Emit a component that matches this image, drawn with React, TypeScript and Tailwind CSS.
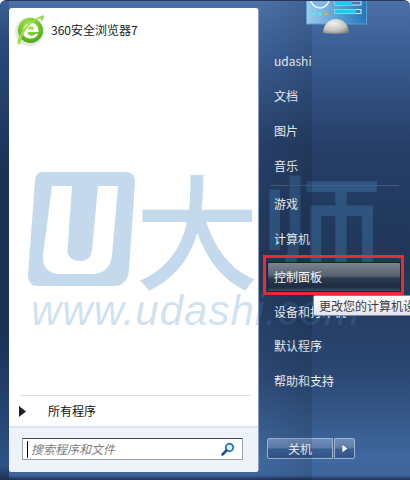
const cjk = "font-['Noto_Sans_CJK_SC','Noto_Sans',sans-serif]";

function BrowserIcon() {
  return (
    <svg width="32" height="34" viewBox="0 0 32 34" className="shrink-0">
      <defs>
        <radialGradient id="ball" cx="0.45" cy="0.3" r="0.8">
          <stop offset="0" stopColor="#b4e65a" />
          <stop offset="0.55" stopColor="#6cc422" />
          <stop offset="1" stopColor="#3f9a12" />
        </radialGradient>
      </defs>
      <circle cx="15.500" cy="18.500" r="14.500" fill="#e3e8e6" />
      <circle cx="16.500" cy="17.500" r="12.500" fill="url(#ball)" />
      <path d="M9 19c0-5.500 3.500-9 8-9s7.500 3 7.500 9H13.500c.3 2.500 1.800 3.700 4 3.700 1.700 0 3-.6 3.800-1.900h3C23 24 20.500 25.500 17 25.500 12.500 25.500 9 23.500 9 19zm4.700-2.500h6.400c-.3-2-1.500-3.300-3.200-3.300s-2.900 1.300-3.200 3.300z" fill="#fff" fillRule="evenodd" />
      <path d="M4 31C2 28 8 11 27 3c2.500-1 3.500-.5 3 1.500-.5 1.500-1.500 3-2.500 4 0-2-.8-3.500-2.500-3C16 9 8 20 6.500 29.500c-.3 2-1.500 2.700-2.500 1.500z" fill="#9bdc45" />
    </svg>
  );
}

function ControlPanelPicture() {
  return (
    <div className="absolute left-[47px] top-0 flex flex-col items-center">
      <svg width="62" height="34" viewBox="0 0 62 34">
        <defs>
          <linearGradient id="pane" x1="0" y1="0" x2="1" y2="0">
            <stop offset="0" stopColor="#9ecbea" />
            <stop offset="1" stopColor="#1f78bd" />
          </linearGradient>
          <radialGradient id="dome" cx="0.4" cy="0.3" r="0.8">
            <stop offset="0" stopColor="#f2f2ee" />
            <stop offset="0.6" stopColor="#c6c6c0" />
            <stop offset="1" stopColor="#7d7f7c" />
          </radialGradient>
        </defs>
        <rect x="0.500" y="-4" width="60" height="27" fill="url(#pane)" stroke="#5f9fd2" />
        <circle cx="14" cy="-2" r="9" fill="#7fb5de" stroke="#e4f2fb" strokeWidth="1.500" />
        <rect x="29" y="0" width="26" height="4" fill="#4c78ba" stroke="#c9ecfa" />
        <rect x="29" y="0" width="17" height="4" fill="#15cdf0" />
        <rect x="29" y="8.500" width="26" height="4" fill="#4c78ba" stroke="#c9ecfa" />
        <rect x="29" y="8.500" width="21" height="4" fill="#15cdf0" />
        <circle cx="8" cy="13" r="1.700" fill="#43eef5" />
        <circle cx="14" cy="13" r="1.700" fill="#43eef5" />
        <circle cx="20" cy="13" r="1.700" fill="#f5a83a" />
        <path d="M17 32c0-8 6-14 13-14s13 6 13 14c-6 1-20 1-26 0z" fill="url(#dome)" />
      </svg>
    </div>
  );
}

function Watermark() {
  const tint = 'rgba(70,140,195,0.32)';
  return (
    <div className="absolute left-0 top-0 w-[410px] h-[480px] pointer-events-none overflow-hidden">
      <svg width="112" height="120" viewBox="0 0 112 120" className="absolute left-[26px] top-[169px]">
        <path
          fill={tint}
          fillRule="evenodd"
          d="M17 2h83c6 0 9 4 9 10l-6 88c-1 10-6 16-15 16H11c-6 0-9-5-9-11L9 11c.5-6 3-9 8-9zM26 16L17 85c-1 12 5 19 18 19h30c13 0 20-7 21-19l6-69H72l-6 64c-.5 7-5 11-12 11s-13-4-12.500-11L46 16z"
        />
      </svg>
      <span
        className="absolute left-[135px] top-[139px] text-[124px] leading-[172px] font-medium font-['Noto_Sans_CJK_SC',sans-serif]"
        style={{ color: tint }}
      >
        大师
      </span>
      <span
        className="absolute left-[31px] top-[290px] text-[42px] leading-[40px] italic tracking-[1px] whitespace-nowrap font-['Liberation_Sans',sans-serif] opacity-80"
        style={{ color: tint }}
      >
        www.udashi.com
      </span>
    </div>
  );
}

function NavRow({ label, className = '' }: { label: string; className?: string }) {
  return (
    <div className={`h-[35px] flex items-center pl-[15px] text-[12px] text-[#f4f7fb] ${className}`}>{label}</div>
  );
}

export default function App() {
  return (
    <div className={`relative w-[410px] h-[480px] overflow-hidden flex rounded-t-[6px] border-t border-[#27395a] ${cjk} bg-[linear-gradient(180deg,#4b70a6_0%,#3b5f95_10%,#263f68_30%,#203659_55%,#2b4873_78%,#4069a0_96%,#3d659b_99%,#1d2f4f_100%)]`}>
      {/* left edge of the glass frame */}
      <div className="w-[9px] h-full shrink-0 bg-[linear-gradient(180deg,#3c5f96_0%,#2a4a7c_8%,#1c3257_35%,#1c3257_70%,#2c5286_97%,#1d2f4f_100%)]" />

      {/* programs column */}
      <div className="w-[250px] h-[464px] mt-[7px] shrink-0 flex flex-col bg-white rounded-[3px] border-r border-[#8f9db3]">
        <div className="flex items-center gap-[5px] pl-[5px] pt-[5px]">
          <BrowserIcon />
          <span className="text-[12px] text-[#1c1c1c]">360安全浏览器7</span>
        </div>
        <div className="flex-1" />
        <div className="ml-[11px] mr-[7px] h-px bg-[#d5e1ec]" />
        <div className="h-[30px] flex items-center pl-[10px] text-[12px] text-[#111]">
          <svg width="7" height="11" viewBox="0 0 7 11" className="shrink-0">
            <path d="M0 0l7 5.500L0 11z" fill="#1a2028" />
          </svg>
          <span className="ml-[22px]">所有程序</span>
        </div>
        <div className="flex-1 max-h-[46px] rounded-b-[3px] border-t-2 border-[#dbe4ef] bg-[#eef2f9] pt-[10px] pl-[13px]">
          <div className="w-[221px] h-[22px] flex items-center bg-white border border-[#9aa0a8] border-t-[#444b55] pl-[4px] pr-[7px]">
            <div className="w-px h-[17px] bg-black" />
            <span className="ml-[3px] flex-1 text-[12px] italic text-[#7d7d7d]">搜索程序和文件</span>
            <svg width="14" height="14" viewBox="0 0 14 14">
              <circle cx="8.500" cy="5.500" r="3.700" fill="#dff0fb" stroke="#2f7fc4" strokeWidth="2" />
              <path d="M5.500 8.500L1.500 12.500" stroke="#1c4f92" strokeWidth="2.500" strokeLinecap="round" />
            </svg>
          </div>
        </div>
      </div>

      <Watermark />

      {/* right column */}
      <div className="relative flex-1 flex flex-col pt-[42px]">
        <div className="absolute left-0 top-0 w-[53px] h-full pointer-events-none bg-[linear-gradient(90deg,rgba(0,0,0,0),rgba(0,0,0,0.12))]" />
        <ControlPanelPicture />
        <NavRow label="udashi" />
        <NavRow label="文档" />
        <NavRow label="图片" />
        <NavRow label="音乐" />
        <div className="mx-[11px] mt-[2px] h-px bg-[#465c80]" />
        <NavRow label="游戏" />
        <NavRow label="计算机" />
        {/* selected row, the red frame is an annotation on top of it */}
        <div className="relative mt-[6px] mb-[1px]">
          <div className="ml-[8px] mr-[9px] h-[30px] flex items-center pl-[6px] text-[12px] text-[#f4f7fb] rounded-[2px] border border-[#1a2230] bg-[linear-gradient(180deg,#7b8492_0%,#59626f_45%,#2c3a50_55%,#1e2b40_85%,#3d4e66_100%)]">
            控制面板
          </div>
          <div className="absolute left-[4px] top-[-7px] w-[141px] h-[40px] border-[3px] border-[#ec2b30]" />
        </div>
        <NavRow label="设备和打印机" className="mt-px" />
        <NavRow label="默认程序" className="-mt-px" />
        <NavRow label="帮助和支持" />
        <div className="flex-1" />
        <div className="flex gap-px ml-[8px] mb-[21px] text-[12px] text-white">
          <div className="w-[66px] h-[21px] flex items-center justify-center rounded-l-[2px] border border-[#9fb3cc] bg-[linear-gradient(180deg,#6f8fbb_0%,#5c7dab_48%,#3a5f92_52%,#31568a_100%)]">
            关机
          </div>
          <div className="w-[21px] h-[21px] flex items-center justify-center rounded-r-[2px] border border-[#9fb3cc] bg-[linear-gradient(180deg,#6f8fbb_0%,#5c7dab_48%,#3a5f92_52%,#31568a_100%)]">
            <svg width="6" height="9" viewBox="0 0 6 9">
              <path d="M0 0l6 4.500L0 9z" fill="#f2f5f9" stroke="#26303f" strokeWidth="0.500" />
            </svg>
          </div>
        </div>
      </div>

      {/* tooltip */}
      <div className="absolute left-[313px] top-[294px] w-[110px] h-[21px] pl-[5px] flex items-center whitespace-nowrap overflow-hidden text-[12px] text-[#3b3b3b] border border-[#85888f] rounded-[2px] bg-[linear-gradient(180deg,#ffffff,#e2e4f0)]">
        更改您的计算机设置
      </div>
    </div>
  );
}
